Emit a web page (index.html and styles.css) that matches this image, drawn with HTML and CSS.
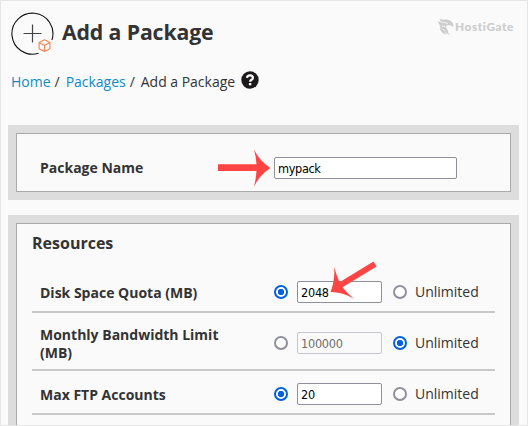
FILE: index.html
```html
<!DOCTYPE html>
<html lang="en">
<head>
<meta charset="utf-8">
<title>Add a Package</title>
<link rel="stylesheet" href="styles.css">
</head>
<body>
<div class="page">
  <header class="header">
    <svg class="page-icon" width="44" height="44" viewBox="0 0 44 44" fill="none">
      <path d="M40.9 28A20.5 20.5 0 1 0 27.5 41.2" stroke="#111" stroke-width="1.1"/>
      <path d="M21.5 12.5v18M12.5 21.5h18" stroke="#444" stroke-width="1.2"/>
      <path d="M33.5 27.8l5.4 2.7v6.2l-5.4 2.8-5.4-2.8v-6.2zM28.1 30.5l5.4 2.9 5.4-2.9M33.5 33.4v6" stroke="#ff7f50" stroke-width="1.1" stroke-linejoin="round"/>
    </svg>
    <h1 class="title">Add a Package</h1>
    <div class="brand">
      <svg width="17" height="18" viewBox="0 0 17 18" fill="#cccccc">
        <path d="M2.500 .4Q5 1.900 8 1.600Q14 1.300 16.300 6.500L16.200 9.300L14 7.500L11 7Q8 7.800 9.300 10Q11.500 12 11 14.500L13 17Q9 15.500 7.500 13.500L9 16.800Q3.500 14.500 2.500 9.500L5.500 11.500Q2.500 9 2.300 6.500L5 8Q1.500 6 .4 3.200Q3 4.500 5 4.300Q3 2.500 2.500 .4z"/>
        <path d="M4.500 4.300Q8 4 11 5.800M5 8Q7 8.500 8.300 8.300M5.500 11.500L8.500 12.500" fill="none" stroke="#fafafa" stroke-width=".9"/>
      </svg>
      <span>HostiGate</span>
    </div>
  </header>
  <nav class="crumbs">
    <a>Home</a><span class="sep">/</span><a>Packages</a><span class="sep">/</span><span>Add a Package</span>
    <svg class="help" width="18" height="18" viewBox="0 0 18 18">
      <circle cx="9" cy="9" r="8.700" fill="#1c1a1b"/>
      <path d="M6 6.900C6.200 3.600 11.900 3.600 11.900 6.900C11.900 8.800 9.100 8.700 9.100 10.700" fill="none" stroke="#fff" stroke-width="2.200"/>
      <rect x="7.900" y="12" width="2.400" height="2.300" fill="#fff"/>
    </svg>
  </nav>
  <section class="card card-name">
    <div class="panel name-row">
      <span class="label">Package Name</span>
      <div class="field wide">mypack</div>
    </div>
  </section>
  <section class="card card-resources">
    <div class="panel resources">
      <h2 class="heading">Resources</h2>
      <div class="row">
        <span class="label">Disk Space Quota (MB)</span>
        <i class="radio on"></i><div class="field">2048</div><i class="radio"></i><span class="unlimited">Unlimited</span>
      </div>
      <div class="row">
        <span class="label">Monthly Bandwidth Limit (MB)</span>
        <i class="radio"></i><div class="field disabled">100000</div><i class="radio on"></i><span class="unlimited">Unlimited</span>
      </div>
      <div class="row">
        <span class="label">Max FTP Accounts</span>
        <i class="radio on"></i><div class="field">20</div><i class="radio"></i><span class="unlimited">Unlimited</span>
      </div>
    </div>
  </section>
  <svg class="arrows" width="528" height="426" viewBox="0 0 528 426" fill="#ff4444">
    <path d="M218 164.300h38.500Q256 157 254 149.300Q259 160.500 270.300 168Q259 175.500 254 187Q256 179 256.500 171H218z"/>
    <path d="M373.500 261.500L376.500 266.500L342.500 287.300Q347 293.500 354.200 299Q343 292 330.500 292Q335 281 334.300 267Q336.500 276 339.500 282.300z"/>
  </svg>
</div>
</body>
</html>
```
FILE: styles.css
```css
* { box-sizing: border-box; }
body { margin: 0; background: #fafafa; color: #333; font-family: "Open Sans", sans-serif; }
.page { position: relative; width: 528px; height: 426px; overflow: hidden; border: 1px solid #e6e6e6; padding: 0 8px 0 7px; }
.header { display: flex; align-items: flex-start; height: 66px; padding: 11px 5px 0 3px; }
.page-icon { flex: none; }
.title { margin: 5px 0 0 7px; font-size: 21.300px; line-height: 30px; font-weight: 700; white-space: nowrap; letter-spacing: -.15px; }
.brand { display: flex; align-items: center; gap: 1px; margin: 6px 0 0 auto; color: #cccccc; font: 900 11.800px/18px Lato, sans-serif; letter-spacing: .6px; }
.crumbs { display: flex; align-items: center; height: 30px; padding: 0 0 2px 3px; font-size: 14px; letter-spacing: -.02px; white-space: nowrap; }
.crumbs a { color: #0d8bcb; }
.sep { margin: 0 6px 0 4px; }
.help { margin-left: 6px; margin-top: -2px; }
.card { background: #ddd; padding: 8px; }
.card-name { height: 75px; margin-top: 28px; }
.card-resources { height: 240px; margin-top: 15px; }
.panel { background: #fafafa; border: 1px solid #aaa; height: 100%; }
.name-row { display: flex; align-items: center; padding: 10px 0 0 23px; }
.label { flex: none; width: 234px; font-size: 14px; line-height: 18px; font-weight: 700; }
.field { flex: none; width: 85px; height: 22px; border: 1px solid #8f8f9d; border-radius: 2px; background: #fff; color: #000; font-family: "DejaVu Sans Condensed", "DejaVu Sans", sans-serif; font-stretch: condensed; font-size: 12.600px; line-height: 21px; letter-spacing: -.25px; padding-left: 3px; }
.wide { width: 183px; letter-spacing: -.35px; }
.disabled { border-color: #c5c5cb; background: #fafafa; color: #6d6d6d; }
.resources { padding: 0 15px; }
.heading { margin: 8px 0 15px; font-size: 16px; line-height: 22px; font-weight: 700; }
.row { display: flex; align-items: center; padding: 12px 0 8px 8px; border-bottom: 2px solid #c9c9c9; }
.row .label { padding: 1px 48px 0 0; margin-bottom: -1px; }
.radio { flex: none; width: 14px; height: 14px; border: 2px solid #8f8f9d; border-radius: 50%; background: #fff; }
.radio.on { border-color: #0060df; background: radial-gradient(circle, #0060df 0 2.800px, #fff 3.500px); }
.radio + .field { margin: 0 11px 0 9px; }
.unlimited { margin-left: 8px; font-size: 14px; line-height: 18px; }
.arrows { position: absolute; left: -1px; top: -1px; }
```
